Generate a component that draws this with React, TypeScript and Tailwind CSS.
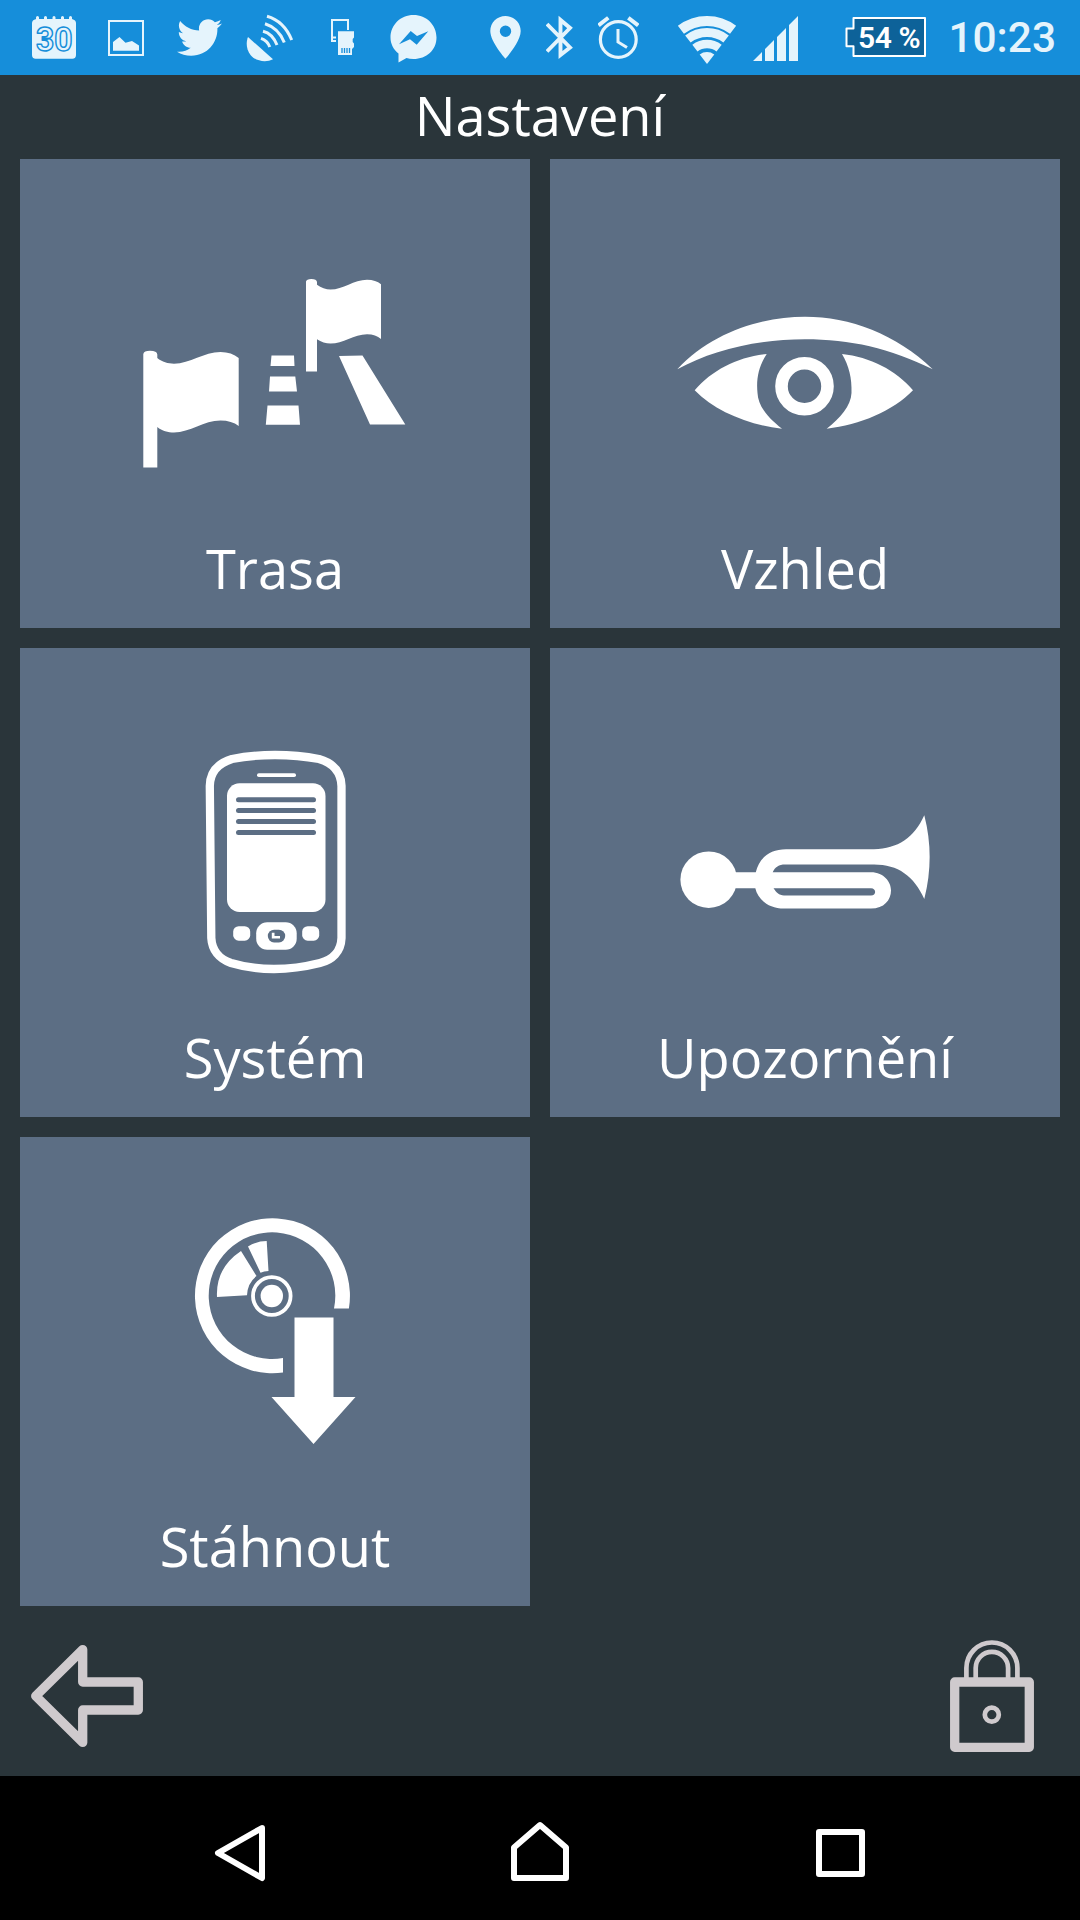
import React from "react";
import { FaTwitter } from "react-icons/fa";

const TILE = "#5c6e84";
const BAR = "#168eda";

function RouteIcon() {
  return (
    <svg viewBox="20 159 510 350" className="h-[350px] w-full fill-white">
      <path d="M143.3 467.6V354Q144 350.8 150 350.8Q157 350.8 157.3 354.5V358C162 362 168 363.7 174 363.7C190 363.7 204 352 220.5 352C228 352 234 354 238.7 358V426C234 422.5 228 420.6 220.5 420.6C204 420.6 190 432.5 174 432.5C168 432.5 162 431 157.3 427V467.6Z" />
      <path d="M306 371.6V281.5Q306.500 279 311.300 279Q316.700 279 317 282V284.800C321 288 326 289.500 330.500 289.500C343 289.500 354 279.700 367 279.700C373 279.700 377.500 281.200 381 284.200V339C377.500 336 373 334.200 367 334.200C354 334.200 343 343.600 330.500 343.600C326 343.600 321 342 317 339.300V371.600Z" />
      <path d="M271.500 355.500H294L294.500 366H270.500ZM270 376.500H295.300L297 391.500H269ZM267.500 405.500H298.500L300 424.800H265.800ZM339 356L362.500 355.500L405.300 424.500H370Z" />
    </svg>
  );
}

function EyeIcon() {
  return (
    <svg viewBox="550 159 510 350" className="h-[350px] w-full fill-white">
      <path d="M677.300 369.300C712 332 762 316.800 805 316.800C850 316.800 896 334 932.700 369.300C890 348 850 339.200 805 339.200C757 339.200 712 350 677.300 369.300Z" />
      <path d="M694.700 390.300C712 370 738 357 766.700 354C759 366 756 378 757.500 393C758 406 768 418 782 428.700C748 425 715 411 694.700 390.300Z" />
      <path d="M913 390.300C896 370 870 357 842 354C849 366 852 378 851.500 393C851 406 840 418 826.700 428.700C860 425 893 411 913 390.300Z" />
      <circle cx="804.500" cy="386.300" r="23" fill="none" stroke="white" strokeWidth="12.600" />
    </svg>
  );
}

function DeviceIcon() {
  return (
    <svg viewBox="20 648 510 350" className="h-[350px] w-full fill-white">
      <path
        d="M209.800 786C210 771 219 763 232 759Q252 755 275 755Q298 755 319 759C333 763 341 772 341.500 786V938C341 952 332 960 320 963Q296 969 274 969Q251 969 231 963C219 959 212 950 211.300 938Z"
        fill="none"
        stroke="white"
        strokeWidth="8.300"
      />
      <rect x="257" y="773.300" width="39" height="3.700" rx="1.800" />
      <rect x="227" y="783.300" width="98.500" height="128.700" rx="12.500" />
      <g fill={TILE}>
        <rect x="236" y="797.300" width="80" height="5" rx="2.500" />
        <rect x="236" y="808" width="80" height="5" rx="2.500" />
        <rect x="236" y="819" width="80" height="5" rx="2.500" />
        <rect x="236" y="830" width="80" height="5" rx="2.500" />
      </g>
      <rect x="233.200" y="926.200" width="17" height="14.500" rx="5.500" />
      <rect x="302.200" y="926.200" width="17" height="14.500" rx="5.500" />
      <rect x="256.200" y="922.200" width="40.500" height="27.500" rx="11" />
      <rect x="267.800" y="929.700" width="17.400" height="12.700" rx="6.300" fill={TILE} />
      <path d="M271.800 932.700V938.500H280V936H274.500V932.700Z" />
    </svg>
  );
}

function TrumpetIcon() {
  return (
    <svg viewBox="550 648 510 350" className="h-[350px] w-full fill-white">
      <circle cx="708.700" cy="879.700" r="28.300" />
      <path d="M734 872.300H755.800C759 858 770 849.300 786 849.300H874C898 848.500 914 838 924.300 815.300Q935 857 924.300 899C914 876 898 864.500 874 864.500H785C779 864.500 775 867 772.700 872.300H871C884 872.300 891 882 891 890.500C891 900 884 908.600 871 908.600H784C769 908.600 758 900 755.300 888.300H734ZM773.500 888.300C776 892 779 895.500 784 895.500H871C876.500 895.500 876.500 888.300 871 888.300Z" />
    </svg>
  );
}

function DiscIcon() {
  return (
    <svg viewBox="20 1137 510 350" className="h-[350px] w-full fill-white">
      <path d="M348.900 1308.500A77.500 77.500 0 1 0 283 1372.500V1358A63.300 63.300 0 1 1 334 1308.500Z" />
      <path d="M241 1251L256.500 1276Q247.500 1283 247 1295.300L217 1297Q215.500 1268 241 1251ZM248 1246.500Q257 1241 266.700 1241L268.500 1271Q264 1271 260.500 1272.700Z" />
      <circle cx="271.800" cy="1296" r="18.800" fill="none" stroke="white" strokeWidth="3.800" />
      <circle cx="271.800" cy="1296" r="11.200" />
      <path d="M294.500 1317.500H333.500V1397H355.500L313.500 1444L271.500 1397H294.500Z" />
    </svg>
  );
}

function Tile({ label, icon }: { label: string; icon: React.ReactNode }) {
  return (
    <button className="flex h-[469px] flex-col items-center bg-[#5c6e84]">
      {icon}
      <span className="mt-[22px] text-[54.2px] leading-[75px]">{label}</span>
    </button>
  );
}

function NotificationIcons() {
  return (
    <div className="flex h-[75px] items-center text-[#e5f4fc]">
      <svg viewBox="32 0 44 75" className="mr-8 h-[75px] w-11 fill-current">
        <path d="M36 21V17.500a1.500 1.500 0 0 1 3 0V19H44V17.500a1.500 1.500 0 0 1 3 0V19H52.500V17.500a1.500 1.500 0 0 1 3 0V19H61V17.500a1.500 1.500 0 0 1 3 0V19H69V17.500a1.500 1.500 0 0 1 3 0V19Q76 20 76 23V55Q76 58.700 72.300 58.700H35.700Q32 58.700 32 55V23Q32 20 36 19Z" />
        <text x="36" y="51.300" textLength="36.500" lengthAdjust="spacingAndGlyphs" fontSize="33.500" fontFamily="Roboto, sans-serif" fontWeight="700" stroke={BAR} strokeWidth="1.500" strokeLinejoin="round">30</text>
      </svg>
      <svg viewBox="108 0 36 75" className="mr-[33px] h-[75px] w-9 fill-current">
        <rect x="109" y="21" width="34" height="34" fill="none" stroke="currentColor" strokeWidth="2" />
        <path d="M113 50.700V42L119.500 37L125.500 42.700L132 41L139 45.500V50.700Z" />
      </svg>
      <FaTwitter className="mr-6 h-[45px] w-[45px]" />
      <svg viewBox="246 0 48 75" className="mr-9 h-[75px] w-12 fill-current">
        <path d="M248 37L273 59.300C266 63 256 61.500 250.500 55C246 49 246 42 248 37Z" />
        <g fill="none" stroke="currentColor" strokeWidth="3">
          <path d="M267 16.200Q284 21 291.700 40M265 23.800Q278.500 28 284.300 42.500M263 31.200Q272.500 33.500 277 45M261 38.300Q267.500 40.500 269.800 47" />
        </g>
      </svg>
      <svg viewBox="330 0 26 75" className="mr-[34px] h-[75px] w-[26px] fill-current">
        <path d="M336 41H332V20H348V30M332 37.500H336" fill="none" stroke="currentColor" strokeWidth="2" />
        <path d="M338 31.300H354V37.500L352.700 39V42L354 43.500V47L352 49V55H338Z" />
        <path d="M342 48V53M344.500 48V53M347 48V53M349.500 48V53" stroke={BAR} strokeWidth="1.300" />
      </svg>
      <svg viewBox="390 0 47 75" className="h-[75px] w-[47px] fill-current">
        <path fillRule="evenodd" d="M413.500 15C426.500 15 436.500 25 436.500 37.500C436.500 50 426.500 59 413.500 59Q409.500 59 406.500 58L398.500 62.500V53.500C393.500 49.500 390.500 44 390.500 37.500C390.500 25 400.500 15 413.500 15ZM399 44.300L410 39.300L416.700 44.700L428.300 31.300L417 36L410.700 31Z" />
      </svg>
    </div>
  );
}

function SystemIcons() {
  return (
    <div className="flex h-[75px] items-center text-[#e5f4fc]">
      <svg viewBox="490 0 32 75" className="mr-6 h-[75px] w-8 fill-current">
        <path fillRule="evenodd" d="M505.500 16C514 16 520.700 22.500 520.700 31C520.700 42 505.500 58.700 505.500 58.700C505.500 58.700 490.300 42 490.300 31C490.300 22.500 497 16 505.500 16ZM505.500 25.500a5.700 5.700 0 1 0 0 11.400a5.700 5.700 0 1 0 0-11.400Z" />
      </svg>
      <svg viewBox="546 0 27 75" className="mr-[25px] h-[75px] w-[27px]">
        <path d="M547 24L570 47.500L560.500 55V20L570 28L547 51.500" fill="none" stroke="currentColor" strokeWidth="3.900" strokeMiterlimit="10" />
      </svg>
      <svg viewBox="598 0 41 75" className="mr-[38px] h-[75px] w-[41px]">
        <g fill="none" stroke="currentColor">
          <circle cx="618.300" cy="39.500" r="17.900" strokeWidth="3.200" />
          <path d="M618 29V42L627 47.500" strokeWidth="3" />
          <path d="M598.500 25.500L608.300 17.800M628.300 17.800L638.200 25.500" strokeWidth="4" />
        </g>
      </svg>
      <svg viewBox="677 0 60 75" className="mr-4 h-[75px] w-[60px] fill-current">
        <g fill="none" stroke="currentColor">
          <path d="M680.900 29.800A43 43 0 0 1 733.100 29.800" strokeWidth="10" />
          <path d="M687.900 39A31.500 31.500 0 0 1 726.100 39" strokeWidth="9" />
          <path d="M694.900 48.100A20 20 0 0 1 719.100 48.100" strokeWidth="8.500" />
        </g>
        <path d="M707 64L699.700 54.500A12 12 0 0 1 714.300 54.500Z" />
      </svg>
      <svg viewBox="753 0 46 75" className="mr-[46px] h-[75px] w-[46px] fill-current">
        <path d="M753 61L762 52V61ZM765 61V49L774 40V61ZM777 61V37L786 28V61ZM789 61V25L798 16V61Z" />
      </svg>
      <div className="relative h-[75px] w-[82px]">
        <svg viewBox="845 0 82 75" className="h-full w-full">
          <path d="M853.500 18H925V56H853.500V46.300H846.500V28.500H853.500Z" fill="#0d6299" stroke="white" strokeWidth="2" strokeLinejoin="round" />
        </svg>
        <span className="absolute top-0 left-[13px] text-[30px] leading-[75px] font-semibold tracking-[-0.4px] whitespace-nowrap text-white">54 %</span>
      </div>
      <span className="w-[129px] text-right text-[42.4px] leading-[81px] font-medium">10:23</span>
    </div>
  );
}

export default function App() {
  return (
    <div className="flex h-[1920px] w-[1080px] flex-col bg-[#2a353a] font-['Open_Sans',sans-serif] text-white">
      <header className="flex h-[75px] justify-between bg-[#168eda] pr-6 pl-8 font-[Roboto,sans-serif]">
        <NotificationIcons />
        <SystemIcons />
      </header>
      <h1 className="h-[84px] text-center text-[54.2px] leading-[80px]">Nastavení</h1>
      <main className="grid grid-cols-2 gap-5 px-5">
        <Tile label="Trasa" icon={<RouteIcon />} />
        <Tile label="Vzhled" icon={<EyeIcon />} />
        <Tile label="Systém" icon={<DeviceIcon />} />
        <Tile label="Upozornění" icon={<TrumpetIcon />} />
        <Tile label="Stáhnout" icon={<DiscIcon />} />
      </main>
      <div className="flex h-[170px] justify-between px-5 text-[#cfcacd]">
        <button aria-label="Zpět">
          <svg viewBox="20 1606 140 170" className="h-[170px] w-[140px]">
            <path d="M82.700 1649.600L35.700 1696L82.700 1742.400V1710H138.300V1682H82.700Z" fill="none" stroke="currentColor" strokeWidth="9.300" strokeLinejoin="round" />
          </svg>
        </button>
        <button aria-label="Zámek">
          <svg viewBox="940 1606 120 170" className="h-[170px] w-[120px]">
            <g fill="none" stroke="currentColor">
              <rect x="954.700" y="1682" width="74.600" height="65.300" strokeWidth="9.300" strokeLinejoin="round" />
              <path d="M966.400 1680V1668A25.500 25.500 0 0 1 1017.400 1668V1680M975.700 1680V1668A16.200 16.200 0 0 1 1008.100 1668V1680" strokeWidth="4.700" />
              <circle cx="991.800" cy="1714.700" r="7" strokeWidth="4.700" />
            </g>
          </svg>
        </button>
      </div>
      <nav className="flex h-36 justify-between bg-black px-[210px]">
        <svg viewBox="210 1776 60 144" className="h-36 w-[60px]">
          <path d="M262 1828L218 1853L262 1878Z" fill="none" stroke="white" strokeWidth="6" strokeLinejoin="round" />
        </svg>
        <svg viewBox="510 1776 60 144" className="h-36 w-[60px]">
          <path d="M540 1825L566 1847.500V1878H514V1847.500Z" fill="none" stroke="white" strokeWidth="6" strokeLinejoin="round" />
        </svg>
        <svg viewBox="810 1776 60 144" className="h-36 w-[60px]">
          <rect x="819" y="1832" width="43" height="42" fill="none" stroke="white" strokeWidth="6" strokeLinejoin="round" />
        </svg>
      </nav>
    </div>
  );
}
